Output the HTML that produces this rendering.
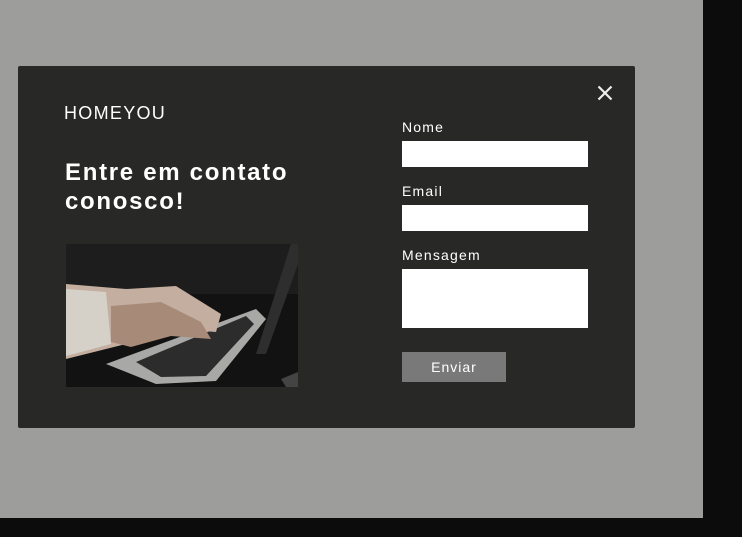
<!DOCTYPE html>
<html><head><style>
html,body{margin:0;padding:0;width:742px;height:537px;background:#0c0c0c;overflow:hidden;font-family:"Liberation Sans",sans-serif;color:#fff}
.bg{position:absolute;left:0;top:0;width:703px;height:518px;background:#9d9d9b}
.modal{position:absolute;left:18px;top:66px;width:617px;height:362px;background:#282827;border-radius:2px}
.a{position:absolute}
.inp{position:absolute;left:384px;width:186px;background:#fff}
.lbl{position:absolute;left:384px;font-size:14px;letter-spacing:1.2px}
</style></head><body>
<div class="bg"></div>
<div class="modal">
<div class="a" style="left:46px;top:37px;font-size:18px;letter-spacing:1.3px">HOMEYOU</div>
<div class="a" style="left:47px;top:92px;font-size:24px;font-weight:bold;line-height:29px;letter-spacing:1.7px">Entre em contato<br>conosco!</div>
<svg class="a" style="left:48px;top:178px" width="232" height="143" viewBox="0 0 232 143">
<rect width="232" height="143" fill="#121212"/>
<rect x="0" y="0" width="232" height="50" fill="#1c1d1c"/>
<polygon points="225,0 232,0 232,20 200,110 190,110" fill="#2e2e2e"/>
<polygon points="40,120 190,65 200,75 150,137 90,140" fill="#a8a8a6"/>
<polygon points="70,118 180,72 188,80 140,132 95,133" fill="#2c2c2c"/>
<path d="M0,40 L60,45 L110,42 L155,70 L150,88 L110,85 L60,100 L0,115Z" fill="#c4ae9f"/>
<path d="M0,45 L40,48 L45,100 L0,112Z" fill="#d6d1c8"/>
<path d="M45,62 L95,58 L135,78 L145,95 L105,92 L65,103 L45,98Z" fill="#a88a78"/>
<polygon points="215,135 232,128 232,143 220,143" fill="#444"/>
</svg>
<svg class="a" style="left:579px;top:19px" width="16" height="16" viewBox="0 0 16 16"><path d="M1.5 1.5L14.5 14.5M14.5 1.5L1.5 14.5" stroke="#eee" stroke-width="2.2"/></svg>
<div class="lbl" style="top:53px">Nome</div>
<div class="inp" style="top:75px;height:26px"></div>
<div class="lbl" style="top:117px">Email</div>
<div class="inp" style="top:139px;height:26px"></div>
<div class="lbl" style="top:181px">Mensagem</div>
<div class="inp" style="top:203px;height:59px"></div>
<div class="a" style="left:384px;top:286px;width:104px;height:30px;background:#787978;font-size:14px;text-align:center;line-height:30px;letter-spacing:1px">Enviar</div>
</div>
</body></html>
